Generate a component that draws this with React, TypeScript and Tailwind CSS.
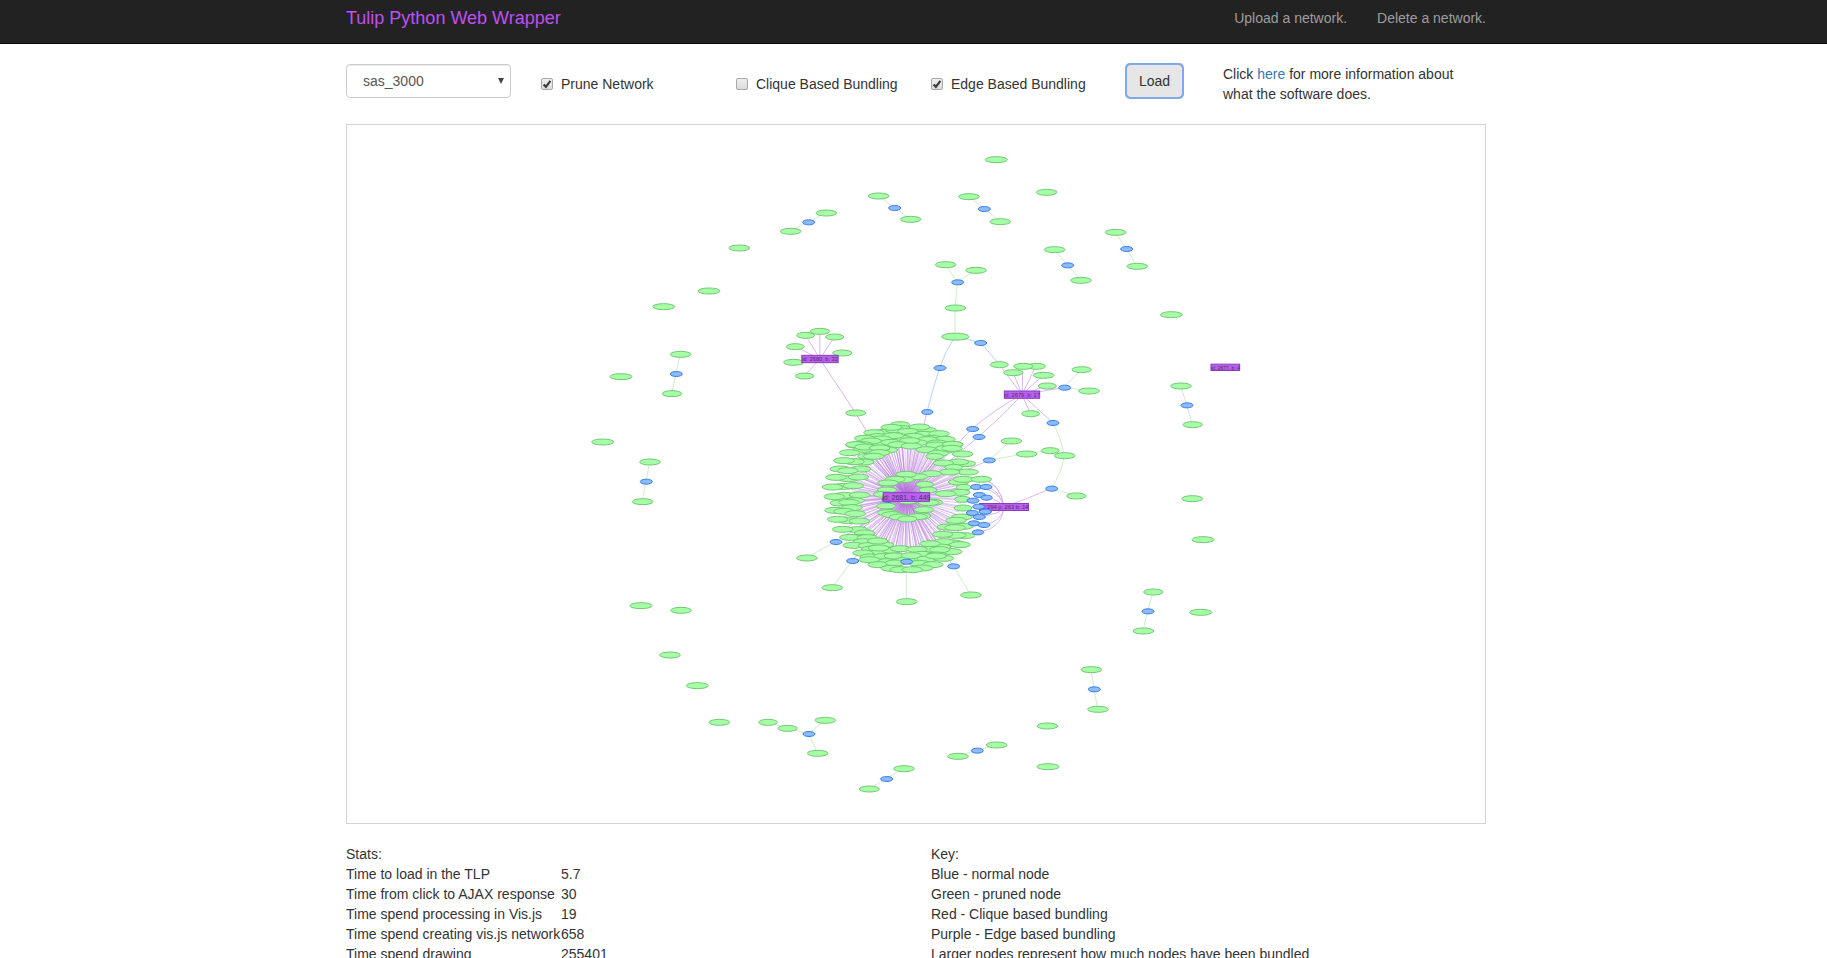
import React from "react";

type Point = [number, number];
type Node = [x: number, y: number, rx?: number];
type Edge = [x1: number, y1: number, x2: number, y2: number];

// The drawing uses three units per pixel. Nodes are grouped by region, and
// every region has its own origin on the canvas.
const shift = (ox: number, oy: number, nodes: Node[]): Node[] =>
  nodes.map(([x, y, rx]) => [x + ox, y + oy, rx]);

const shiftEdges = (ox: number, oy: number, edges: Edge[]): Edge[] =>
  edges.map(([a, b, c, d]) => [a + ox, b + oy, c + ox, d + oy]);

const HUB: Point = [1678, 1116];

const pruned: Node[] = [
  ...shift(699, -15, [
    [895, 227], [991, 297], [738, 278], [631, 333], [477, 383], [386, 512, 33],
    [250, 559, 33], [301, 702], [275, 820, 29], [122, 769, 33], [1096, 433],
    [1125, 563], [1125, 649, 41], [826, 878, 30], [676, 645, 27], [719, 633, 29],
    [763, 650, 27], [645, 679, 27], [786, 698, 29], [640, 726, 30], [673, 767, 27],
  ]),
  ...shift(1779, -15, [
    [168, 118, 33], [319, 216], [86, 229], [180, 304], [343, 388], [422, 480],
    [526, 336], [591, 438], [107, 450], [693, 583, 33], [177, 733, 27], [219, 757, 29],
    [288, 738, 27], [249, 738, 29], [310, 765], [321, 797, 27], [271, 880, 27],
    [424, 748, 29], [446, 812], [722, 797], [757, 913, 29],
  ]),
  ...shift(1659, 825, [
    [333, 122], [379, 161], [450, 151, 27], [493, 166], [528, 287, 29], [212, 584], [19, 604],
  ]),
  ...shift(699, 825, [
    [67, 125, 33], [209, 185], [187, 304], [680, 473], [756, 562], [182, 616, 33],
    [302, 630], [269, 764], [351, 856, 33], [417, 966], [563, 966, 28], [622, 984, 29],
    [735, 960], [712, 1059],
  ]),
  ...shift(1479, 1065, [
    [1056, 55], [1088, 178, 33], [939, 335, 29], [909, 452], [1081, 396, 33],
    [753, 568], [773, 687], [621, 737], [623, 859, 33], [469, 794], [353, 828],
    [191, 865], [87, 926, 30],
  ]),
];

const cluster: Node[] = [
  // upper rim
  ...shift(1419, 855, [
    [239, 43, 29], [244, 55], [193, 66], [225, 59], [318, 60], [298, 50], [213, 51],
    [263, 63], [161, 67], [311, 72], [356, 70], [280, 78], [173, 79], [245, 84],
    [219, 76], [335, 84], [374, 87], [322, 88], [184, 86], [133, 84], [290, 97],
    [268, 91], [176, 101], [152, 92], [213, 96], [350, 98], [234, 103], [127, 103],
    [107, 104], [397, 103], [347, 104], [273, 107], [138, 110], [157, 115],
    [318, 118], [377, 115], [369, 121], [201, 119], [354, 129], [343, 138, 27],
  ]),
  // left rim
  ...shift(1299, 825, [
    [250, 147], [227, 133], [254, 140], [298, 143], [298, 157], [263, 168], [208, 157],
    [280, 168], [250, 185], [221, 184], [191, 181], [241, 206], [180, 206],
    [202, 211], [204, 235], [167, 231], [234, 230], [190, 258], [219, 256], [157, 260],
    [193, 285], [162, 289], [238, 284], [221, 301], [180, 308], [206, 306],
    [215, 322], [164, 330], [191, 333], [225, 340], [204, 361], [172, 357],
    [237, 362], [232, 388], [187, 387], [253, 398], [234, 411], [209, 411],
    [261, 412], [250, 424], [219, 435], [264, 436],
  ]),
  // right rim
  ...shift(1659, 825, [
    [138, 144], [157, 132], [155, 144], [187, 161], [195, 190], [174, 185],
    [129, 188], [160, 201, 27], [203, 215], [148, 215], [93, 220], [175, 245],
    [190, 237], [243, 237], [190, 261, 22], [178, 276], [136, 280], [187, 297, 24],
    [188, 323, 27], [185, 350], [167, 360], [188, 378], [141, 380], [164, 382],
    [192, 406], [167, 405], [127, 402], [158, 428], [130, 424], [179, 433],
    [154, 454], [120, 440], [89, 430],
  ]),
  // lower rim
  ...shift(1299, 825, [
    [309, 433], [292, 422], [275, 446], [300, 456], [335, 450], [295, 443],
    [248, 458], [270, 470], [310, 468], [360, 445], [440, 456], [455, 447], [478, 448],
    [410, 447], [425, 462], [470, 464], [320, 484], [342, 467], [375, 480], [393, 466],
    [440, 476], [489, 474], [467, 467], [267, 478], [294, 493], [417, 489],
    [345, 488], [457, 493], [333, 504], [427, 503], [360, 508], [396, 508],
  ]),
  // inner ring
  ...shift(1419, 855, [
    [291, 199], [258, 192], [249, 208], [224, 207], [203, 218], [313, 222, 26],
    [200, 239, 29], [323, 239, 27], [190, 252], [340, 276, 27], [325, 277],
    [263, 272], [198, 287, 29], [311, 298, 29], [202, 307], [215, 313], [307, 317, 24],
    [290, 319], [238, 320], [261, 326, 29],
  ]),
];

const normal: Node[] = [
  ...shift(699, -15, [[943, 263], [685, 306], [288, 761], [1132, 486], [1079, 743], [1041, 875, 17]]),
  ...shift(1779, -15, [
    [132, 266], [382, 435], [559, 386], [121, 668], [373, 802], [97, 926], [116, 950],
    [338, 908], [740, 855],
  ]),
  ...shift(1659, 825, [
    [267, 180], [454, 265], [160, 498], [19, 484], [228, 260, 17], [257, 260],
    [237, 284], [259, 292, 17], [218, 301], [255, 334], [216, 338], [237, 350],
    [221, 369, 17], [251, 374], [233, 396, 17],
  ]),
  ...shift(699, 825, [[198, 244], [767, 425], [686, 1001]]),
  ...shift(1299, 825, [[217, 482], [322, 299, 17]]),
  ...shift(1479, 1065, [[923, 393], [762, 627], [411, 811], [139, 896]]),
];

const greenEdges: Edge[] = [
  ...shiftEdges(699, -15, [
    [895, 227, 943, 263], [943, 263, 991, 297], [738, 278, 685, 306], [685, 306, 631, 333],
    [301, 702, 288, 761], [288, 761, 275, 820], [1096, 433, 1132, 486],
    [1187, 450, 1132, 486], [1132, 486, 1125, 563], [1125, 563, 1125, 649],
  ]),
  ...shiftEdges(1779, -15, [
    [86, 229, 132, 266], [132, 266, 180, 304], [343, 388, 382, 435], [382, 435, 422, 480],
    [526, 336, 559, 386], [559, 386, 591, 438], [424, 748, 373, 802],
    [446, 812, 373, 802], [722, 797, 740, 855], [740, 855, 757, 913],
  ]),
  ...shiftEdges(1659, 825, [
    [267, 180, 333, 122], [267, 180, 379, 161], [379, 161, 450, 151], [450, 151, 493, 166],
    [454, 265, 528, 287], [160, 498, 212, 584], [19, 484, 19, 604],
  ]),
  ...shiftEdges(699, 825, [
    [209, 185, 198, 244], [198, 244, 187, 304], [767, 425, 680, 473], [817, 482, 756, 562],
    [563, 966, 622, 984], [622, 984, 686, 1001], [686, 1001, 735, 960],
    [686, 1001, 712, 1059],
  ]),
  ...shiftEdges(1479, 1065, [
    [939, 335, 923, 393], [923, 393, 909, 452], [753, 568, 762, 627], [762, 627, 773, 687],
    [469, 794, 411, 811], [411, 811, 353, 828], [191, 865, 139, 896], [139, 896, 87, 926],
  ]),
];

const purpleEdges: Edge[] = [
  ...shiftEdges(699, -15, [
    [720, 717, 676, 645], [720, 717, 719, 633], [720, 717, 763, 650], [720, 717, 645, 679],
    [720, 717, 786, 698], [720, 717, 640, 726], [720, 717, 673, 767], [720, 717, 826, 878],
    [826, 878, 979, 1131], [1041, 875, 979, 1131],
  ]),
  ...shiftEdges(1779, -15, [
    [246, 824, 177, 733], [246, 824, 219, 757], [247, 824, 248, 738], [246, 824, 288, 738],
    [246, 824, 310, 765], [246, 824, 321, 797], [246, 824, 271, 880], [246, 824, 373, 802],
    [246, 824, 338, 908],
  ]),
  ...shiftEdges(1659, 825, [
    [216, 86, 19, 291], [236, 110, 19, 291], [267, 180, 19, 291], [160, 498, 19, 291],
    [19, 484, 19, 291], [-143, 482, 19, 291], [-193, 425, 19, 291],
  ]),
];

const bundleTargets: Point[] = [
  [1902, 1062], [1887, 1085], [1916, 1085], [1918, 1117], [1914, 1159],
  [1896, 1175], [1910, 1199], [1892, 1221],
];

interface LabelBox { x: number; y: number; w: number; h: number; size: number; text: string }

const labels: LabelBox[] = [
  { x: 1419, y: 702, w: 109, h: 22, size: 17, text: "id: 2680, b: 32" },
  { x: 2025, y: 809, w: 106, h: 22, size: 17, text: "id: 2679, b: 17" },
  { x: 2635, y: 727, w: 86, h: 19, size: 15, text: "id: 2677, b: 4" },
  { x: 1971, y: 1146, w: 147, h: 21, size: 17, text: "id: 294 p: 263 b: 14" },
  { x: 1678, y: 1116, w: 139, h: 26, size: 21, text: "id: 2681, b: 449" },
];

const rays: Point[] = Array.from({ length: 110 }, (_, i) => {
  const a = (i / 110) * Math.PI * 2;
  return [HUB[0] + Math.cos(a) * 165, HUB[1] + Math.sin(a) * 160];
});

function Ellipses({ nodes, blue = false }: { nodes: Node[]; blue?: boolean }) {
  return (
    <g
      className={blue ? "fill-[#8fbafa] stroke-[#3580ea]" : "fill-[#a6ffa6] stroke-[#74c876]"}
      strokeWidth={3}
    >
      {nodes.map(([x, y, rx], i) => (
        <ellipse key={i} cx={x + 1} cy={y + 1} rx={rx ?? (blue ? 18 : 31)} ry={blue ? 7.5 : rx === 41 ? 10.5 : 9} />
      ))}
    </g>
  );
}

function Lines({ edges }: { edges: Edge[] }) {
  return (
    <>
      {edges.map(([x1, y1, x2, y2], i) => (
        <line key={i} x1={x1} y1={y1} x2={x2} y2={y2} />
      ))}
    </>
  );
}

function NodeLabel({ x, y, w, h, size, text }: LabelBox) {
  return (
    <g>
      <rect x={x - w / 2} y={y - h / 2} width={w} height={h} className="fill-[#b960ee] stroke-[#8a3cc0]" strokeWidth={3} />
      <text
        x={x}
        y={y + 1}
        textAnchor="middle"
        dominantBaseline="central"
        fontSize={size}
        className="fill-[#4d3060] font-['Liberation_Sans',Arial,sans-serif]"
      >
        {text}
      </text>
    </g>
  );
}

function NetworkGraph() {
  return (
    <svg viewBox="0 0 3414 2094" className="h-full w-full" role="img" aria-label="Network graph">
      <g fill="none" strokeWidth={3}>
        <g className="stroke-[#cdeecd]">
          <Lines edges={greenEdges} />
          <path d="M2116 893Q2140 930 2152 991Q2144 1045 2113 1090" />
        </g>
        <g className="stroke-[#b5d2fb]">
          <path d="M1824 634Q1795 680 1778 728Q1755 800 1740 860" />
          <path d="M1824 634L1900 653Q1930 685 1956 718" />
        </g>
        <g className="stroke-[#dbb8ee]">
          <Lines edges={purpleEdges} />
          <path d="M2025 809Q1940 855 1876 911" />
          <path d="M2025 809Q1960 880 1895 935" />
          <path d="M2113 1090Q2050 1118 1971 1146" />
          {bundleTargets.map(([x, y], i) => (
            <path key={i} d={`M1971 1146Q${y < 1146 ? 1958 : 1965} ${y + (y < 1146 ? 8 : -8)} ${x} ${y}`} />
          ))}
          <path d="M1971 1146Q1962 1075 1902 1062" />
        </g>
        <g className="stroke-[#b06fd8]" strokeOpacity={0.38}>
          {cluster.map(([x, y], i) => (
            <line key={i} x1={HUB[0]} y1={HUB[1]} x2={x} y2={y} />
          ))}
          {rays.map(([x, y], i) => (
            <line key={i} x1={HUB[0]} y1={HUB[1]} x2={x} y2={y} />
          ))}
        </g>
      </g>
      <Ellipses nodes={pruned} />
      <Ellipses nodes={cluster} />
      <Ellipses nodes={normal} blue />
      {labels.map((label) => (
        <NodeLabel key={label.text} {...label} />
      ))}
      <Ellipses nodes={[[1894, 1144], [1914, 1159]]} blue />
    </svg>
  );
}

function CheckOption({ label, checked = false }: { label: string; checked?: boolean }) {
  return (
    <div className="w-[195px] px-[15px] pt-[10px]">
      <label className="flex items-center gap-2">
        <span className="relative flex h-3 w-3">
          <input
            type="checkbox"
            defaultChecked={checked}
            className="peer h-3 w-3 appearance-none rounded-[2px] border border-[#a9a9a9] bg-gradient-to-b from-[#eeeeee] to-[#dcdcdc]"
          />
          <svg
            viewBox="0 0 12 12"
            className="pointer-events-none absolute inset-0 hidden h-3 w-3 fill-none stroke-[#3c3c3c] peer-checked:block"
            strokeWidth={2.2}
          >
            <path d="M2.6 6.4L4.9 8.8L9.4 2.8" />
          </svg>
        </span>
        {label}
      </label>
    </div>
  );
}

const stats: [string, string][] = [
  ["Time to load in the TLP", "5.7"],
  ["Time from click to AJAX response", "30"],
  ["Time spend processing in Vis.js", "19"],
  ["Time spend creating vis.js network", "658"],
  ["Time spend drawing", "255401"],
];

const keyLines = [
  "Key:",
  "Blue - normal node",
  "Green - pruned node",
  "Red - Clique based bundling",
  "Purple - Edge based bundling",
  "Larger nodes represent how much nodes have been bundled",
];

export default function App() {
  return (
    <div className="h-screen overflow-x-hidden overflow-y-auto bg-white font-['Liberation_Sans',Arial,sans-serif] text-sm/5 text-[#333333] [scrollbar-width:none]">
      <nav className="border-b border-[#080808] bg-[#222222] pl-[5px]">
        <div className="mx-auto flex max-w-[1170px] justify-between px-[15px] pt-2 pb-[15px]">
          <a href="#" className="text-lg/5 text-[#bf50f5]">Tulip Python Web Wrapper</a>
          <div className="flex gap-[30px] text-[#9d9d9d]">
            <a href="#upload">Upload a network.</a>
            <a href="#delete">Delete a network.</a>
          </div>
        </div>
      </nav>

      <main className="pl-[5px]">
        <div className="mx-auto max-w-[1170px] pt-5">
          <form className="flex items-start" onSubmit={(e) => e.preventDefault()}>
            <div className="w-[195px] px-[15px]">
              <div className="relative">
                <select
                  aria-label="Network"
                  className="block h-[34px] w-full appearance-none rounded border border-[#cccccc] bg-white px-4 text-[#555555] shadow-[inset_0_1px_1px_rgba(0,0,0,0.075)]"
                >
                  <option>sas_3000</option>
                </select>
                <svg viewBox="0 0 6 6" className="pointer-events-none absolute top-[14px] right-[7px] h-[6px] w-[6px] fill-[#444444]">
                  <path d="M0 0H6L3 6Z" />
                </svg>
              </div>
            </div>
            <CheckOption label="Prune Network" checked />
            <CheckOption label="Clique Based Bundling" />
            <CheckOption label="Edge Based Bundling" checked />
            <div className="w-[97px] px-[15px]">
              <button
                type="submit"
                className="h-[34px] rounded border border-[#8c8c8c] bg-[#e6e6e6] px-3 outline-2 -outline-offset-1 outline-[#7ea9ea]"
              >
                Load
              </button>
            </div>
            <p className="w-[292px] px-[15px]">
              Click <a href="#about" className="text-[#337ab7]">here</a> for more information about what the software does.
            </p>
          </form>

          <div className="px-[15px] pt-5">
            <div className="h-[700px] border border-[#d3d3d3]">
              <NetworkGraph />
            </div>
          </div>

          <div className="grid grid-cols-2 pt-5">
            <section className="px-[15px]">
              <h2>Stats:</h2>
              <table>
                <tbody>
                  {stats.map(([name, value]) => (
                    <tr key={name}>
                      <td className="min-w-[215px] p-0">{name}</td>
                      <td className="p-0">{value}</td>
                    </tr>
                  ))}
                </tbody>
              </table>
            </section>
            <section className="px-[15px]">
              {keyLines.map((line) => (
                <p key={line}>{line}</p>
              ))}
            </section>
          </div>
        </div>
      </main>
    </div>
  );
}
